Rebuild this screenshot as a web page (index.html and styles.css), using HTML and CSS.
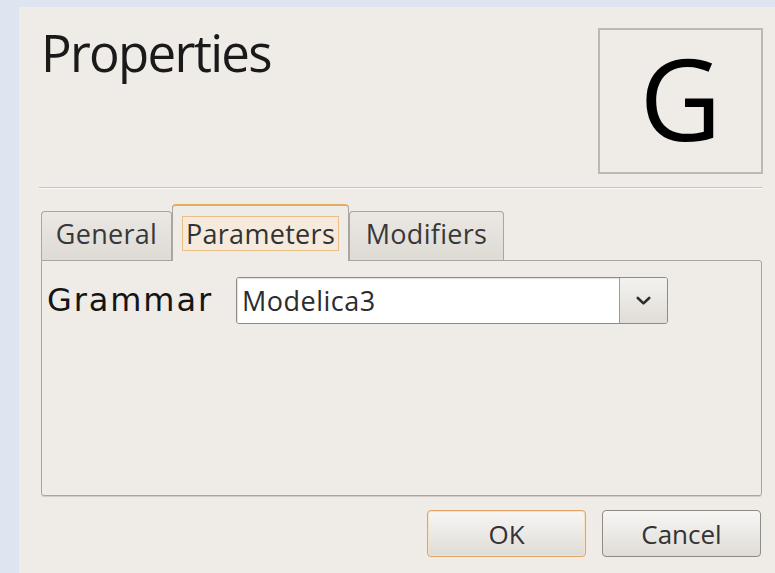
FILE: index.html
```html
<!DOCTYPE html>
<html lang="en">
<head>
<meta charset="utf-8">
<title>Properties</title>
<link rel="stylesheet" href="styles.css">
</head>
<body>
<div class="dialog">
  <header class="head">
    <h1 class="title">Properties</h1>
    <div class="glyph-box"><span class="glyph">G</span></div>
  </header>
  <div class="separator"></div>

  <nav class="tabs">
    <div class="tab tab-general"><span class="tab-label">General</span></div>
    <div class="tab tab-params active"><span class="tab-label focus">Parameters</span></div>
    <div class="tab tab-mods"><span class="tab-label">Modifiers</span></div>
  </nav>
  <section class="panel">
    <div class="field-row">
      <label class="field-label">Grammar</label>
      <div class="combo">
        <span class="combo-value">Modelica3</span>
        <span class="combo-button">
          <svg width="15" height="10" viewBox="0 0 15 10" aria-hidden="true">
            <path d="M1.8 2 L7.5 7.4 L13.2 2" fill="none" stroke="#2e2e2e" stroke-width="2.6" stroke-linecap="round" stroke-linejoin="round"/>
          </svg>
        </span>
      </div>
    </div>
  </section>

  <footer class="actions">
    <button class="btn default">OK</button>
    <button class="btn">Cancel</button>
  </footer>
</div>
</body>
</html>
```

FILE: styles.css
```css
html, body {
  margin: 0;
  height: 100%;
}

body {
  background: #dee5f1;
  font-family: "Open Sans", "Noto Sans", sans-serif;
  color: #3a3a3a;
}

.dialog {
  margin: 7px 0 0 19px;
  height: calc(100% - 7px);
  box-sizing: border-box;
  background: #efebe6;
  padding: 21px 13px 16px 22px;
  display: flex;
  flex-direction: column;
}

/* header: big title plus the glyph preview box */
.head {
  display: flex;
  justify-content: space-between;
  align-items: flex-start;
  height: 146px;
  margin-right: -1px;
}

.title {
  margin: 0;
  font-size: 51px;
  font-weight: 400;
  line-height: 48px;
  letter-spacing: -1.7px;
  color: #1a1a1a;
}

.glyph-box {
  width: 165px;
  height: 146px;
  box-sizing: border-box;
  border: 2px solid #bdb9b2;
  display: flex;
  align-items: center;
  justify-content: center;
  padding-bottom: 8px;
}

.glyph {
  font-size: 113px;
  line-height: 1;
  color: #000;
}

.separator {
  margin: 13px 0 0 -2px;
  border-top: 1px solid #c7c3bc;
  border-bottom: 1px solid #faf9f7;
  height: 0;
}

/* notebook tabs */
.tabs {
  display: flex;
  align-items: flex-end;
  margin-top: 15px;
}

.tab {
  box-sizing: border-box;
  height: 49px;
  padding: 3px 0 9px;
  border: 1px solid #aaa59e;
  border-bottom: none;
  border-radius: 4px 4px 0 0;
  background: linear-gradient(#ebe8e4, #dedad4);
  font-size: 27px;
  letter-spacing: 0.3px;
  color: #383838;
  display: flex;
  align-items: flex-end;
  justify-content: center;
}

.tab-general { width: 131px; }
.tab-params { width: 177px; }
.tab-mods { width: 155px; }

.tab.active {
  position: relative;
  z-index: 1;
  height: 57px;
  margin-bottom: -1px;
  padding: 0 0 10px;
  border-top: 2px solid #e6ac62;
  background: #efebe6;
  color: #333;
}

.tab-label {
  display: block;
  line-height: 33px;
  padding: 0 3px;
  border: 1px solid transparent;
}

.tab-label.focus {
  border-color: #eabf86;
  background: #f5eadc;
}

.panel {
  box-sizing: border-box;
  height: 236px;
  border: 1px solid #a9a49d;
  border-radius: 0 3px 3px 3px;
  box-shadow: 0 1px 0 #d2cec7;
  padding: 16px 5px;
}

.field-row {
  display: grid;
  grid-template-columns: 189px 432px;
  align-items: center;
}

.field-label {
  font-family: "DejaVu Sans", sans-serif;
  font-size: 32px;
  letter-spacing: 1.9px;
  color: #151515;
  padding-bottom: 2px;
}

.combo {
  box-sizing: border-box;
  height: 47px;
  display: flex;
  border: 1px solid #8f8b84;
  border-radius: 3px;
  overflow: hidden;
}

.combo-value {
  flex: 1;
  background: #fff;
  padding-left: 5px;
  font-size: 27px;
  letter-spacing: 0.5px;
  line-height: 45px;
  color: #2c2c2c;
  box-shadow: inset 1px 1px 1px rgba(0, 0, 0, 0.12);
}

.combo-button {
  width: 47px;
  border-left: 1px solid #9e9a93;
  background: linear-gradient(#f4f2ef, #e0ddd8);
  display: flex;
  align-items: center;
  justify-content: center;
}

/* dialog buttons */
.actions {
  display: flex;
  justify-content: flex-end;
  gap: 16px;
  margin-top: 14px;
  margin-right: 1px;
}

.btn {
  width: 159px;
  height: 47px;
  border: 1px solid #8e8a84;
  border-radius: 4px;
  background: linear-gradient(#f7f6f4, #dfdcd7);
  font-family: "Open Sans", "Noto Sans", sans-serif;
  font-size: 26px;
  color: #333;
  padding: 0;
}

.btn.default {
  border-color: #e0a562;
  box-shadow: inset 0 0 0 1px #f6e2c6;
}
```
